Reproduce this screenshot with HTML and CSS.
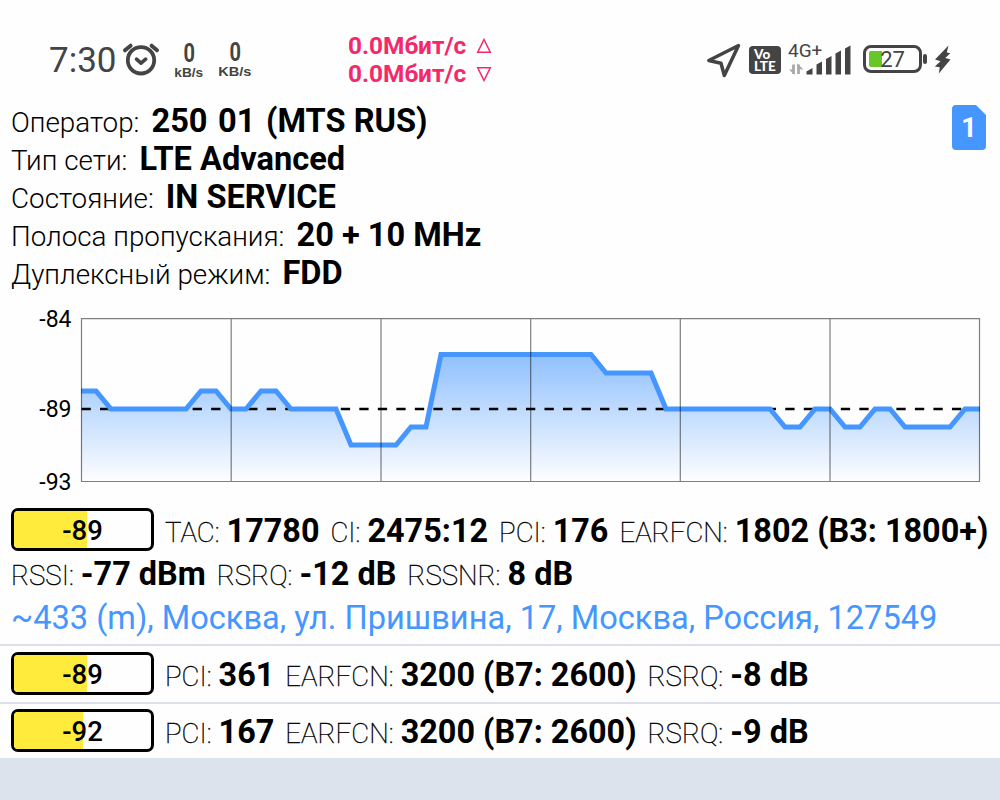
FILE: index.html
```html
<!DOCTYPE html>
<html lang="ru">
  <head>
    <meta charset="utf-8">
    <title>Network</title>
    <link rel="stylesheet" href="styles.css">
  </head>

  <body>
    <!-- Status bar -->
    <div class="statusbar">
      <span class="clock">7:30</span>
      <svg class="alarm" width="38" height="36" viewBox="0 0 38 36" fill="none" stroke="#444" stroke-linecap="round">
        <circle cx="19" cy="19.3" r="13.2" stroke-width="3.8" />
        <path d="M3 9.3L8.6 4.7M29.6 4.7L35 9.3" stroke-width="4" />
        <path d="M14.5 18.2L19 22.2L23.7 18.2" stroke-width="3.6" stroke-linejoin="round" />
      </svg>
      <div class="speed"><b>0</b><span>kB/s</span></div>
      <div class="speed upload"><b>0</b><span>KB/s</span></div>

      <div class="traffic">
        <div>0.0Мбит/с
          <svg width="16" height="16" viewBox="0 0 16 16"><path d="M8 1.5L14.3 14.2H1.7Z" /></svg>
        </div>
        <div>0.0Мбит/с
          <svg width="16" height="16" viewBox="0 0 16 16"><path d="M8 14.5L14.3 1.8H1.7Z" /></svg>
        </div>
      </div>

      <svg class="location" width="36" height="36" viewBox="0 0 36 36" fill="none" stroke="#444" stroke-width="3.5" stroke-linejoin="round">
        <path d="M32.5 2.5L2.8 17.5L15 20.3L18.3 32.5Z" />
      </svg>
      <div class="volte"><span>Vo</span><span>LTE</span></div>
      <div class="mobile">
        <span class="net">4G+</span>
        <svg width="64" height="32" viewBox="0 0 64 32">
          <path d="M5.5 30V20.5M10.5 20.5V30" stroke="#aaa" stroke-width="2.8" />
          <path d="M1 25.5L6.6 31V25.5ZM9.4 25V19.5L15.5 25.5Z" fill="#aaa" />
          <path d="M18.5 30.5V27.5L24.5 24V30.5ZM28.5 30.5V20.5L34 17.5V30.5ZM38 30.5V15L43.5 12V30.5ZM47.5 30.5V9.5L53 6.5V30.5ZM57 30.5V4.5L62.5 1.5V30.5Z" fill="#444" />
        </svg>
      </div>
      <div class="battery"><i></i><span>27</span></div>
      <svg class="bolt" width="18" height="30" viewBox="0 0 18 30"><path d="M15.5 0.5L2 14.5L7.5 16.3L1.8 21.6L6.8 22.3L5.8 28.5L17.5 14.5L12.3 13L17.3 8.2L13.8 7.6Z" fill="#444" /></svg>
    </div>

    <!-- Operator info -->
    <div class="info">
      <div class="lines">
        <div><span>Оператор:</span><b><span class="plmn">250 01 </span>(MTS RUS)</b></div>
        <div><span>Тип сети:</span><b>LTE Advanced</b></div>
        <div><span>Состояние:</span><b>IN SERVICE</b></div>
        <div><span>Полоса пропускания:</span><b>20 + 10 MHz</b></div>
        <div><span>Дуплексный режим:</span><b>FDD</b></div>
      </div>
      <div class="sim">1</div>
    </div>

    <!-- Signal chart -->
    <svg class="chart" width="1000" height="200" viewBox="0 300 1000 200">
      <defs>
        <linearGradient id="fill" gradientUnits="userSpaceOnUse" x1="0" y1="319" x2="0" y2="482">
          <stop offset="0" stop-color="#4596ff" stop-opacity="0.76" />
          <stop offset="1" stop-color="#4596ff" stop-opacity="0" />
        </linearGradient>
      </defs>
      <path fill="url(#fill)" d="M81 391H96L111 409H186L201 391H216L231 409H246L261 391H276L291 409H336L351 445H396L411 427H426L441 354.5H591L606 373H651L666 409H770L785 427H800L815 409H830L845 427H860L875 409H890L905 427H950L965 409H980V482H81Z" />
      <path class="average" d="M81.5 409H980" />
      <path class="signal" d="M81 391H96L111 409H186L201 391H216L231 409H246L261 391H276L291 409H336L351 445H396L411 427H426L441 354.5H591L606 373H651L666 409H770L785 427H800L815 409H830L845 427H860L875 409H890L905 427H950L965 409H980" />
      <path class="grid" d="M81.5 318.6H979.5V481.5H81.5ZM231.2 318.6V481.5M381 318.6V481.5M530.7 318.6V481.5M680.3 318.6V481.5M830 318.6V481.5" />
      <text x="71.5" y="326.5">-84</text>
      <text x="71.5" y="417">-89</text>
      <text x="71.5" y="489.5">-93</text>
    </svg>

    <!-- Serving cell -->
    <div class="cell serving">
      <div class="row">
        <div class="level"><i style="width: 53.5%"></i><span>-89</span></div>
        <span>TAC:</span><b>17780</b>
        <span>CI:</span><b>2475:12</b>
        <span>PCI:</span><b>176</b>
        <span>EARFCN:</span><b>1802 (B3: 1800+)</b>
      </div>
      <div class="row second">
        <span>RSSI:</span><b>-77 dBm</b>
        <span>RSRQ:</span><b>-12 dB</b>
        <span>RSSNR:</span><b>8 dB</b>
      </div>
      <div class="address">~433 (m), Москва, ул. Пришвина, 17, Москва, Россия, 127549</div>
    </div>

    <!-- Neighbours -->
    <div class="cell">
      <div class="row">
        <div class="level"><i style="width: 53.5%"></i><span>-89</span></div>
        <span>PCI:</span><b>361</b>
        <span>EARFCN:</span><b>3200 (B7: 2600)</b>
        <span>RSRQ:</span><b>-8 dB</b>
      </div>
    </div>
    <div class="cell last">
      <div class="row">
        <div class="level"><i style="width: 50.5%"></i><span>-92</span></div>
        <span>PCI:</span><b>167</b>
        <span>EARFCN:</span><b>3200 (B7: 2600)</b>
        <span>RSRQ:</span><b>-9 dB</b>
      </div>
    </div>
  </body>
</html>
```

FILE: styles.css
```css
* {
  box-sizing: border-box;
}

body {
  margin: 0;
  height: 800px;
  overflow: hidden;
  background: #dce3ed;
  font-family: Roboto, sans-serif;
  color: #000;
  white-space: nowrap;
}

b {
  font-weight: 700;
}

.statusbar {
  display: flex;
  align-items: flex-start;
  height: 102px;
  padding: 41px 0 0 49px;
  background: #fefefe;
  color: #444;
}

.clock {
  width: 73px;
  font-size: 35px;
  line-height: 39px;
}

.speed {
  display: flex;
  flex-direction: column;
  align-items: center;
  width: 34px;
  margin: 0 0 0 12px;
  font: 700 13px/14px "Liberation Sans", sans-serif;
}

.speed b {
  font: 700 25px/25px Roboto, sans-serif;
  transform: scaleX(0.8);
}

.speed span {
  transform: scaleX(1.05);
}

.speed.upload {
  margin: -1px 0 0 12px;
}

.speed.upload span {
  transform: scaleX(1.12);
}

.traffic {
  width: 150px;
  margin: -9px 0 0 96px;
  color: #f5286a;
  font-weight: 700;
  font-size: 24.4px;
  line-height: 28px;
}

.traffic svg {
  margin-left: 4px;
  fill: none;
  stroke: #f5286a;
  stroke-width: 1.5;
}

.location {
  margin: 2px 0 0 208px;
}

.volte {
  display: flex;
  flex-direction: column;
  width: 32px;
  height: 28px;
  margin: 5px 0 0 7px;
  padding: 2px 0 0 5px;
  border-radius: 4px;
  background: #444;
  color: #fff;
  font: 900 13.5px/12px Lato, sans-serif;
}

.mobile {
  position: relative;
  width: 64px;
  margin: 3px 0 0 7px;
}

.mobile svg {
  display: block;
}

.net {
  position: absolute;
  top: -2px;
  left: 0;
  font-size: 19px;
  line-height: 18px;
}

.battery {
  position: relative;
  width: 59px;
  height: 28px;
  margin: 4px 0 0 11px;
  border: 3px solid #444;
  border-radius: 8px;
  font-size: 22px;
  line-height: 24px;
  text-align: center;
}

.battery i {
  position: absolute;
  top: 3px;
  left: 3px;
  width: 13px;
  height: 16px;
  border-radius: 2px 0 0 2px;
  background: #65c728;
}

.battery span {
  position: relative;
}

.battery::after {
  content: "";
  position: absolute;
  top: 6px;
  right: -8px;
  width: 4px;
  height: 10px;
  border-radius: 2px;
  background: #444;
}

.bolt {
  margin: 4px 0 0 11px;
}

.info {
  display: flex;
  justify-content: space-between;
  height: 198px;
  padding: 0 14px 0 11px;
  background: #fefefe;
}

.lines div {
  display: flex;
  align-items: baseline;
  gap: 12px;
  height: 38px;
  line-height: 38px;
}

.lines div > span {
  font-size: 27.8px;
  font-weight: 300;
}

.lines b {
  font-size: 32.6px;
}

.plmn {
  word-spacing: 2.5px;
}

.sim {
  width: 34px;
  height: 45px;
  margin-top: 3px;
  border-radius: 4px;
  background: #4596ff;
  clip-path: polygon(0 0, 24px 0, 34px 10px, 34px 100%, 0 100%);
  color: #fff;
  font-size: 27px;
  font-weight: 700;
  line-height: 47px;
  text-align: center;
}

.chart {
  display: block;
  background: #fefefe;
}

.chart text {
  font-size: 23px;
  text-anchor: end;
}

.signal {
  fill: none;
  stroke: #4596ff;
  stroke-width: 5;
}

.average {
  stroke: #000;
  stroke-width: 2.4;
  stroke-dasharray: 9.3 9.22;
}

.grid {
  fill: none;
  stroke: #000;
  stroke-opacity: 0.5;
  stroke-width: 1.2;
}

.cell {
  height: 58px;
  padding: 6px 0 0 11px;
  border-bottom: 2px solid #dcdfec;
  background: #fefefe;
}

.cell.serving {
  height: 146px;
  padding-top: 8px;
}

.cell.last {
  height: 54px;
  padding-top: 5px;
  border: 0;
}

.row {
  display: flex;
  align-items: baseline;
  height: 43px;
  line-height: 47px;
}

.row > span {
  margin-right: 7px;
  font-size: 27.6px;
  font-weight: 100;
  -webkit-text-stroke: 0.4px #000;
}

.row > b {
  margin-right: 11px;
  font-size: 32.4px;
}

.level {
  position: relative;
  align-self: flex-start;
  width: 143px;
  height: 43px;
  margin-right: 11px;
  border: 3px solid #000;
  border-radius: 7px;
  font-size: 27.5px;
  font-weight: 500;
  line-height: 40px;
  text-align: center;
}

.level i {
  position: absolute;
  top: 0;
  left: 0;
  height: 100%;
  border-radius: 4px 0 0 4px;
  background: #ffeb3b;
}

.level span {
  position: relative;
}

.address {
  height: 43px;
  color: #4596ff;
  font-size: 32.6px;
  line-height: 48px;
}
```
